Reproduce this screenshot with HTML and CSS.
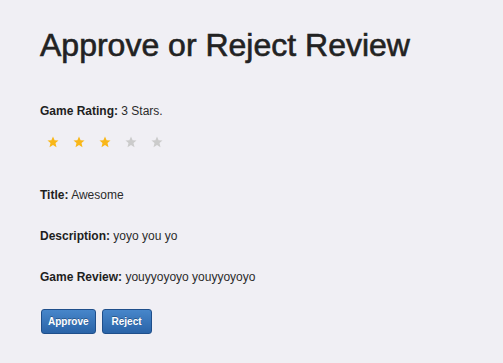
FILE: index.html
```html
<!DOCTYPE html>
<html lang="en">
<head>
    <meta charset="UTF-8">
    <meta name="viewport" content="width=device-width, initial-scale=1.0">
    <title>Approve or Reject Review</title>
    <link rel="stylesheet" href="styles.css">
</head>
<body>
    <div class="container">
        <h1>Approve or Reject Review</h1>

        <p class="field"><strong>Game Rating:</strong> 3 Stars.</p>
        <div class="stars">
            <svg class="star on" viewBox="0 0 24 24"><polygon points="12,1 15.2,8.6 23,9 17,14.2 19,22.5 12,18 5,22.5 7,14.2 1,9 8.8,8.6"/></svg>
            <svg class="star on" viewBox="0 0 24 24"><polygon points="12,1 15.2,8.6 23,9 17,14.2 19,22.5 12,18 5,22.5 7,14.2 1,9 8.8,8.6"/></svg>
            <svg class="star on" viewBox="0 0 24 24"><polygon points="12,1 15.2,8.6 23,9 17,14.2 19,22.5 12,18 5,22.5 7,14.2 1,9 8.8,8.6"/></svg>
            <svg class="star" viewBox="0 0 24 24"><polygon points="12,1 15.2,8.6 23,9 17,14.2 19,22.5 12,18 5,22.5 7,14.2 1,9 8.8,8.6"/></svg>
            <svg class="star" viewBox="0 0 24 24"><polygon points="12,1 15.2,8.6 23,9 17,14.2 19,22.5 12,18 5,22.5 7,14.2 1,9 8.8,8.6"/></svg>
        </div>

        <p class="field"><strong>Title:</strong> Awesome</p>
        <p class="field"><strong>Description:</strong> yoyo you yo</p>
        <p class="field"><strong>Game Review:</strong> youyyoyoyo youyyoyoyo</p>

        <div class="actions">
            <button type="button" class="btn">Approve</button>
            <button type="button" class="btn btn-reject">Reject</button>
        </div>
    </div>
</body>
</html>
```

FILE: styles.css
```css
* {
    box-sizing: border-box;
    margin: 0;
    padding: 0;
    font-family: 'Liberation Sans', Arial, sans-serif;
}

body {
    background-color: #f0eff4;
    color: #2b2b2b;
}

.container {
    padding: 25px 40px 0;
}

h1 {
    font-size: 32px;
    line-height: 40px;
    font-weight: normal;
    color: #222;
    -webkit-text-stroke: 0.6px #222;
    margin-bottom: 37px;
}

.field {
    font-size: 12px;
    line-height: 18px;
    margin-bottom: 23px;
}

.field strong {
    color: #1e1e1e;
}

.stars {
    display: flex;
    gap: 14px;
    padding-left: 7px;
    margin-top: -7px;
    margin-bottom: 38px;
}

.star {
    width: 12px;
    height: 12px;
    fill: #cbcbcb;
}

.star.on {
    fill: #f9b718;
}

.actions {
    display: flex;
    gap: 6px;
    margin-top: 2px;
    padding-left: 1px;
}

.btn {
    height: 25px;
    padding: 0 6px;
    font-size: 10px;
    font-weight: bold;
    color: #fff;
    text-shadow: 0 -1px 0 rgba(0, 0, 0, 0.3);
    background: linear-gradient(#4786ca, #2a64a8);
    border: 1px solid #1f4f8b;
    border-radius: 3px;
    cursor: pointer;
}

.btn-reject {
    padding: 0 9px;
}
```
